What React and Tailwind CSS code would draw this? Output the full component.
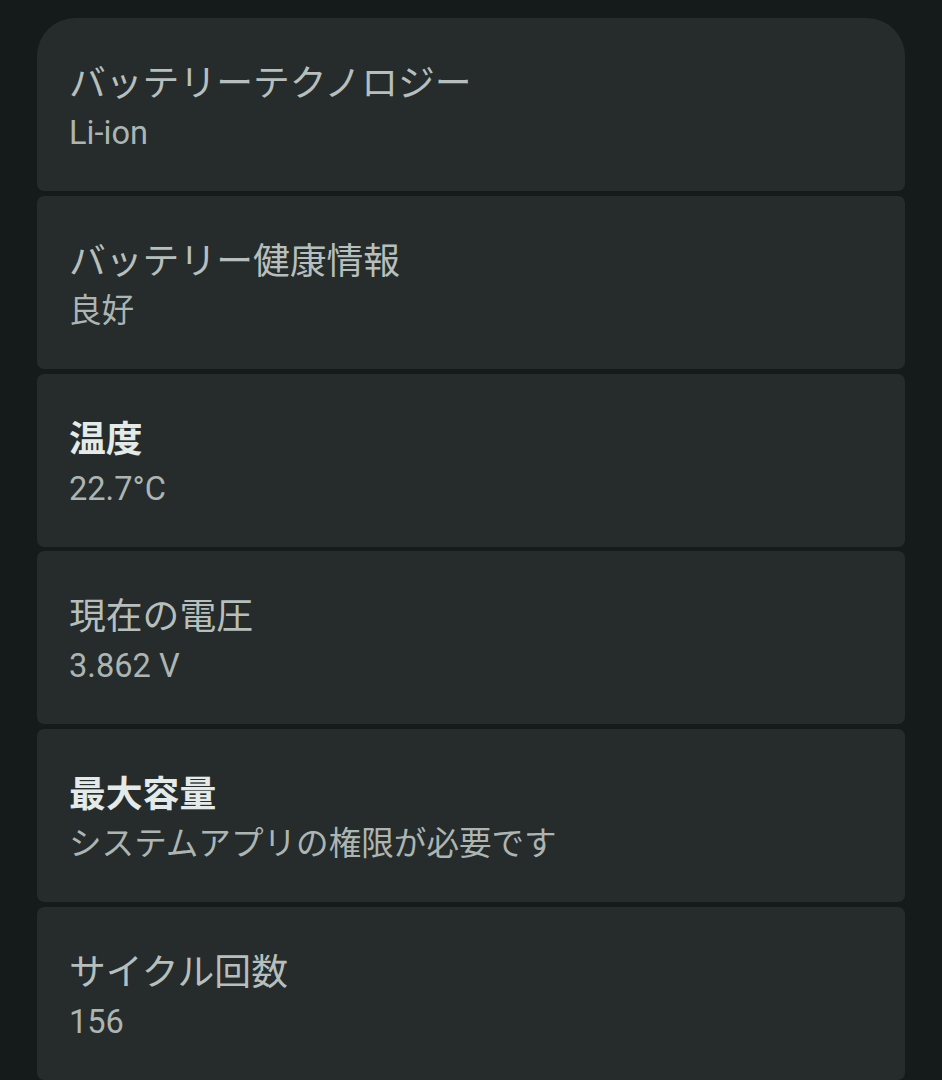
export default function App() {
  const items = [
    { t: "バッテリーテクノロジー", v: "Li-ion", b: false },
    { t: "バッテリー健康情報", v: "良好", b: false },
    { t: "温度", v: "22.7°C", b: true },
    { t: "現在の電圧", v: "3.862 V", b: false },
    { t: "最大容量", v: "システムアプリの権限が必要です", b: true },
    { t: "サイクル回数", v: "156", b: false },
  ];
  return (
    <div
      className="w-[942px] h-[1080px] overflow-hidden bg-[#141b1a] px-[37px] pt-[18px] flex flex-col gap-[4.8px]"
      style={{ fontFamily: "Roboto, 'Noto Sans CJK JP', sans-serif" }}
    >
      {items.map((it, i) => (
        <div
          key={i}
          className={
            i === 0
              ? "shrink-0 h-[173px] bg-[#252c2b] rounded-t-[38px] rounded-b-[7px] pl-[32px] pt-[42px]"
              : "shrink-0 h-[173px] bg-[#252c2b] rounded-[7px] pl-[32px] pt-[42px]"
          }
        >
          <div
            className={
              it.b
                ? "text-[36.8px] leading-[48px] font-bold text-[#e3eae8]"
                : "text-[36.8px] leading-[48px] font-normal text-[#b7bfbd]"
            }
          >
            {it.t}
          </div>
          <div className="text-[32.6px] leading-[50px] text-[#adb5b3]">{it.v}</div>
        </div>
      ))}
    </div>
  );
}
